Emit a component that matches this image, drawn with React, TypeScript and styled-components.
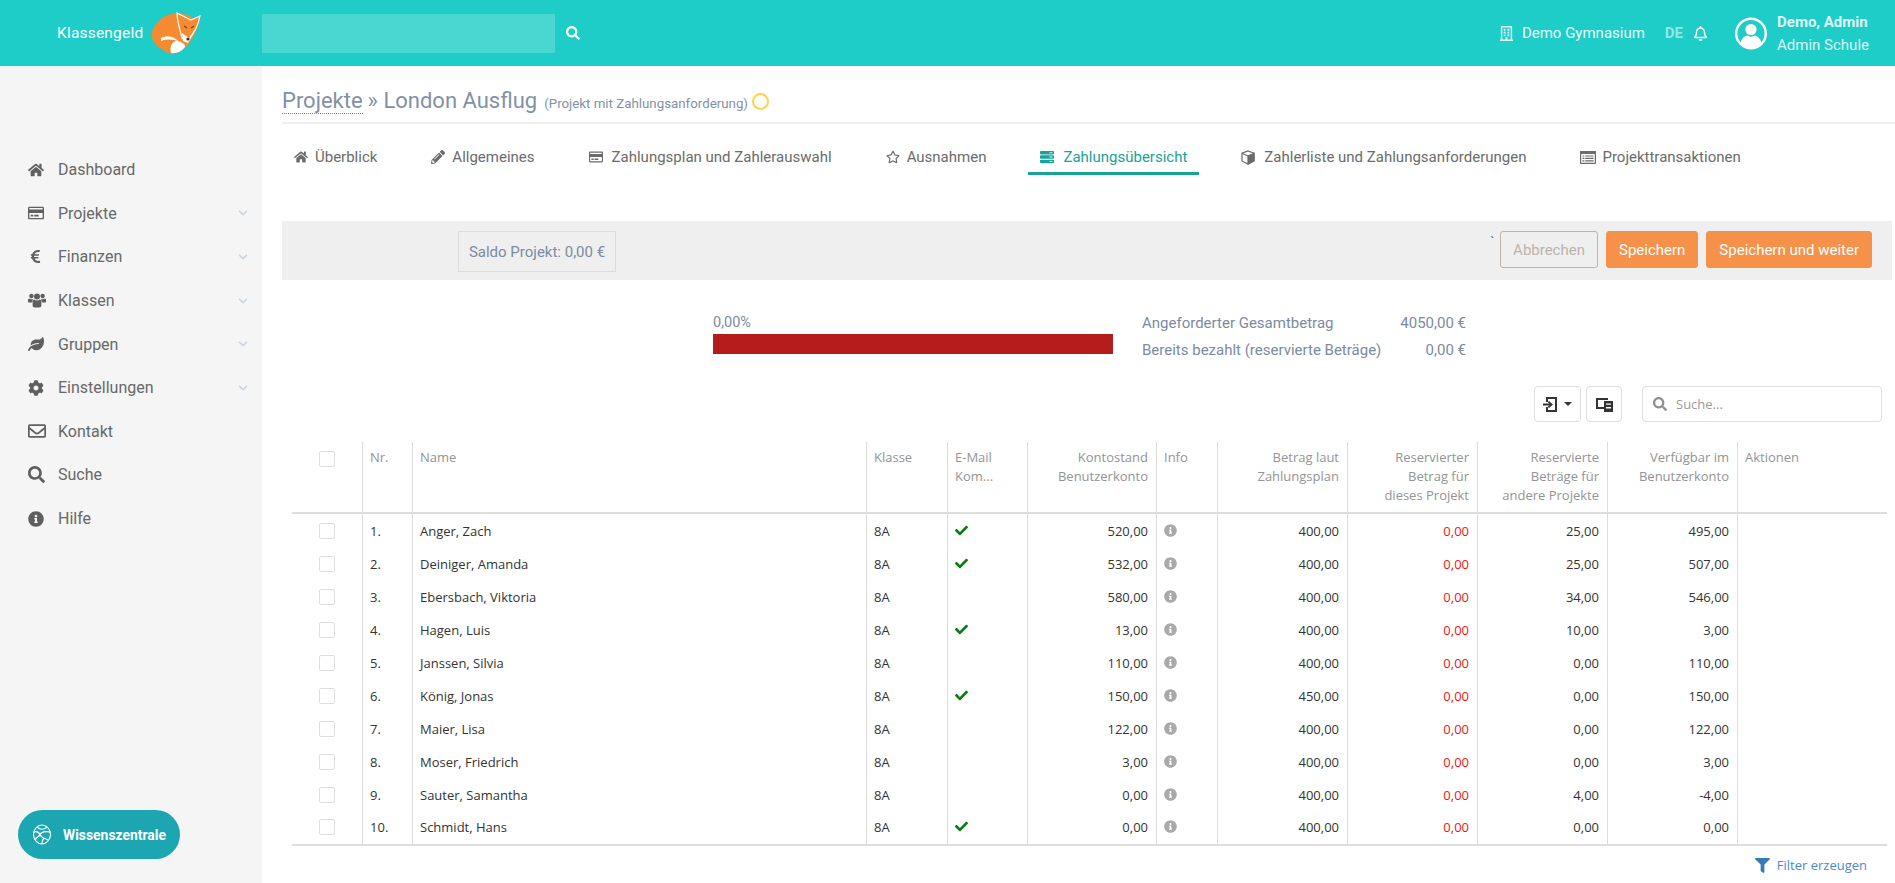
import React from "react";
import styled, { createGlobalStyle } from "styled-components";
import {
   FaHome,
   FaRegCreditCard,
   FaEuroSign,
   FaLeaf,
   FaCog,
   FaRegEnvelope,
   FaSearch,
   FaInfoCircle,
   FaChevronDown,
   FaPencilAlt,
   FaRegStar,
   FaServer,
   FaRegBuilding,
   FaRegBell,
   FaCheck,
   FaFilter,
} from "react-icons/fa";

const GlobalStyle = createGlobalStyle`
   html, body {
      margin: 0;
      padding: 0;
      background: #fff;
      font-family: Roboto, "Liberation Sans", sans-serif;
   }
   * {
      box-sizing: border-box;
   }
`;

const Page = styled.div`
   width: 1895px;
   height: 883px;
   overflow: hidden;
   display: flex;
   flex-direction: column;
`;

const Header = styled.header`
   height: 66px;
   flex: none;
   display: flex;
   align-items: center;
   background: #1ecdc7;
   color: #fff;
`;

const Brand = styled.div`
   width: 262px;
   padding-left: 57px;
   display: flex;
   align-items: center;
   gap: 8px;
   font-size: 15.5px;
   letter-spacing: 0.2px;
`;

const HeaderSearch = styled.div`
   width: 293px;
   height: 39px;
   background: #4ad7d2;
`;

const HeaderSearchIcon = styled(FaSearch)`
   margin-left: 11px;
   font-size: 14px;
`;

const HeaderRight = styled.div`
   margin-left: auto;
   padding-right: 26px;
   display: flex;
   align-items: center;
`;

const School = styled.div`
   display: flex;
   align-items: center;
   gap: 8px;
   font-size: 15px;
   color: #e8fbfa;
`;

const Lang = styled.span`
   margin-left: 20px;
   font-size: 15px;
   font-weight: 700;
   color: #93e6e3;
`;

const Bell = styled(FaRegBell)`
   margin-left: 10px;
   font-size: 15px;
`;

const AvatarWrap = styled.span`
   margin-left: 27px;
   display: flex;
`;

const UserBlock = styled.div`
   margin-left: 10px;
   padding-top: 2px;
   font-size: 15px;
   line-height: 23px;
   color: #dff7f6;
`;

const UserName = styled.div`
   font-weight: 700;
`;

const Body = styled.div`
   flex: 1;
   min-height: 0;
   display: flex;
`;

const Sidebar = styled.aside`
   width: 262px;
   flex: none;
   display: flex;
   flex-direction: column;
   background: #f5f5f5;
   padding: 82px 0 24px;
`;

const Nav = styled.nav`
   display: flex;
   flex-direction: column;
`;

const NavItem = styled.a`
   height: 43.6px;
   padding: 0 14px 0 28px;
   display: flex;
   align-items: center;
   font-size: 16px;
   color: #686868;
`;

const NavIcon = styled.span<{ $size?: number }>`
   width: 30px;
   flex: none;
   display: flex;
   align-items: center;
   font-size: ${(p) => p.$size || 16}px;
   color: #5f5f5f;
`;

const NavChevron = styled(FaChevronDown)`
   margin-left: auto;
   font-size: 10px;
   color: #cbd5de;
`;

const KnowledgeButton = styled.a`
   margin: auto 0 0 18px;
   width: 162px;
   height: 49px;
   border-radius: 25px;
   background: #1ca6b2;
   color: #fff;
   display: flex;
   align-items: center;
   gap: 11px;
   padding-left: 14px;
   font-size: 13.9px;
   font-weight: 700;
`;

const Content = styled.main`
   flex: 1;
   min-width: 0;
   padding: 0 3px 0 20px;
`;

const TitleRow = styled.div`
   height: 58px;
   margin-right: -3px;
   padding-top: 13px;
   display: flex;
   align-items: center;
   color: #8291a5;
   border-bottom: 2px solid #efefef;
   font-size: 22px;
`;

const TitleLink = styled.a`
   border-bottom: 1px dotted #6f7f94;
   line-height: 25px;
`;

const TitleText = styled.span`
   margin-left: 5px;
`;

const TitleNote = styled.small`
   margin-left: 7px;
   font-size: 13.3px;
   padding-top: 6px;
`;

const StatusRing = styled.span`
   margin: 2px 0 0 4px;
   width: 17px;
   height: 17px;
   border-radius: 50%;
   border: 2px solid #fcd34d;
`;

const Tabs = styled.div`
   margin-top: 14px;
   height: 37px;
   display: flex;
   gap: 30px;
`;

const Tab = styled.a<{ $active?: boolean }>`
   padding: 10px 12px 0;
   height: 37px;
   display: flex;
   align-items: flex-start;
   gap: 6px;
   font-size: 15px;
   line-height: 18px;
   color: ${(p) => (p.$active ? "#17a398" : "#6b6b6b")};
   border-bottom: ${(p) => (p.$active ? "3px solid #17a398" : "0")};
`;

const TabIcon = styled.span<{ $w: number }>`
   width: ${(p) => p.$w}px;
   height: 18px;
   flex: none;
   display: flex;
   align-items: center;
   font-size: 14px;
`;

const ActionBar = styled.div`
   margin-top: 46px;
   height: 59px;
   padding: 10px 20px 0 176px;
   display: flex;
   align-items: flex-start;
   background: #efefef;
`;

const Saldo = styled.div`
   width: 158px;
   height: 41px;
   border: 1px solid #dcdcdc;
   display: flex;
   align-items: center;
   justify-content: center;
   font-size: 15px;
   color: #7c8ba0;
`;

const Tick = styled.span`
   margin-left: auto;
   margin-right: 6px;
   font-size: 12px;
   line-height: 22px;
   color: #555;
`;

const Button = styled.button<{ $primary?: boolean }>`
   height: 37px;
   padding: 0 12px;
   margin-left: ${(p) => (p.$primary ? "8px" : "0")};
   border-radius: 3px;
   border: 1px solid ${(p) => (p.$primary ? "#f69149" : "#bfb2aa")};
   background: ${(p) => (p.$primary ? "#f69149" : "transparent")};
   color: ${(p) => (p.$primary ? "#fff" : "#bfb2aa")};
   font-family: inherit;
   font-size: 15px;
`;

const Summary = styled.div`
   margin: 31px 0 0 431px;
   display: flex;
   gap: 29px;
   color: #7c8ba0;
   font-size: 15px;
`;

const ProgressBlock = styled.div`
   width: 400px;
   font-size: 14.5px;
`;

const ProgressLabel = styled.div`
   height: 23px;
   line-height: 24px;
`;

const ProgressBar = styled.div`
   height: 20px;
   background: #b51c1c;
`;

const Totals = styled.div`
   width: 324px;
   margin-top: -2px;
`;

const TotalRow = styled.div`
   height: 27px;
   display: flex;
   justify-content: space-between;
   align-items: center;
`;

const TableTools = styled.div`
   margin-top: 23px;
   padding-right: 10px;
   display: flex;
   justify-content: flex-end;
   gap: 5px;
`;

const ToolButton = styled.button<{ $wide?: boolean }>`
   height: 36px;
   width: ${(p) => (p.$wide ? 47 : 36)}px;
   padding: 0;
   display: flex;
   align-items: center;
   justify-content: center;
   gap: 7px;
   background: #fff;
   border: 1px solid #dfdfdf;
   border-radius: 4px;
`;

const Caret = styled.span`
   border-left: 4px solid transparent;
   border-right: 4px solid transparent;
   border-top: 4px solid #333;
`;

const SearchField = styled.div`
   margin-left: 15px;
   width: 240px;
   height: 36px;
   padding-left: 10px;
   display: flex;
   align-items: center;
   gap: 9px;
   border: 1px solid #dfdfdf;
   border-radius: 4px;
   font-family: "Open Sans", sans-serif;
   font-size: 13px;
   color: #9b9b9b;
   svg {
      color: #8f8f8f;
      font-size: 14px;
   }
`;

const Table = styled.table`
   margin: 20px 0 0 10px;
   width: 1595px;
   table-layout: fixed;
   border-collapse: separate;
   border-spacing: 0;
   font-family: "Open Sans", "Noto Sans", sans-serif;
   font-size: 13px;
`;

const HeadCell = styled.th<{ $right?: boolean }>`
   height: 72px;
   padding: 6px 8px 0 7px;
   vertical-align: top;
   text-align: ${(p) => (p.$right ? "right" : "left")};
   font-weight: 400;
   line-height: 19px;
   color: #949494;
   border-right: 1px solid #dcdcdc;
   border-bottom: 2px solid #dedede;
   &:last-child {
      border-right: 0;
   }
`;

const Cell = styled.td<{ $right?: boolean; $red?: boolean }>`
   height: 33px;
   padding: 0 8px 0 7px;
   text-align: ${(p) => (p.$right ? "right" : "left")};
   color: ${(p) => (p.$red ? "#f01414" : "#333")};
   border-right: 1px solid #dcdcdc;
   &:last-child {
      border-right: 0;
   }
`;

const Row = styled.tr`
   &:last-child td {
      height: 35px;
      padding-bottom: 2px;
      border-bottom: 2px solid #dedede;
   }
`;

const CheckBox = styled.span`
   display: block;
   width: 16px;
   height: 16px;
   margin-left: 20px;
   border: 1px solid #dedede;
   border-radius: 2px;
   background: #fff;
`;

const HeadCheckBox = styled(CheckBox)`
   margin-top: 3px;
`;

const Ok = styled(FaCheck)`
   display: block;
   font-size: 13px;
   color: #0a7d12;
`;

const InfoMark = styled(FaInfoCircle)`
   display: block;
   font-size: 13px;
   color: #a9a9a9;
`;

const FilterLink = styled.a`
   margin: 10px 25px 0 0;
   display: flex;
   justify-content: flex-end;
   align-items: center;
   gap: 7px;
   font-family: "Open Sans", sans-serif;
   font-size: 13px;
   color: #4a8bc9;
   svg {
      color: #337ab7;
      font-size: 15px;
   }
`;

const UsersIcon = () => (
   <svg width="18" height="15" viewBox="0 0 18 15" fill="currentColor">
      <circle cx="3.4" cy="3" r="2.2" />
      <circle cx="14.6" cy="3" r="2.2" />
      <circle cx="9" cy="3.6" r="3" />
      <path d="M0 6.8 C0 5.8 1 5.6 2 5.8 C3 6.4 4 6.4 5 6 C4.8 7.2 4.4 8.4 3.8 9.4 H1 C0.3 9.4 0 9 0 8.4 Z" />
      <path d="M18 6.8 C18 5.8 17 5.6 16 5.8 C15 6.4 14 6.4 13 6 C13.2 7.2 13.6 8.4 14.2 9.4 H17 C17.7 9.4 18 9 18 8.4 Z" />
      <path d="M4.6 9 C4.6 7.4 5.4 6.6 6.2 6.6 C7.6 7.8 10.4 7.8 11.8 6.6 C12.6 6.6 13.4 7.4 13.4 9 V12.6 C13.4 13.8 12.6 14.6 11.4 14.6 H6.6 C5.4 14.6 4.6 13.8 4.6 12.6 Z" />
   </svg>
);

const CubeIcon = () => (
   <svg width="14" height="15" viewBox="0 0 14 15" fill="none" stroke="currentColor" strokeWidth="1.2">
      <path d="M7 1 L13 3.2 V11 L7 14 L1 11 V3.2 Z" />
      <path d="M7 6 V14 L13 11 V3.4 Z" fill="currentColor" />
      <path d="M1 3.2 L7 6" />
   </svg>
);

const ListIcon = () => (
   <svg width="16" height="13" viewBox="0 0 16 13" fill="currentColor">
      <path fillRule="evenodd" d="M1 0 H15 C15.6 0 16 .4 16 1 V12 C16 12.6 15.6 13 15 13 H1 C.4 13 0 12.6 0 12 V1 C0 .4 .4 0 1 0 Z M1.2 3 V11.8 H14.8 V3 Z" />
      <path d="M2.4 4.4 H4.4 V5.6 H2.4 Z M5.2 4.4 H13.6 V5.6 H5.2 Z M2.4 6.8 H4.4 V8 H2.4 Z M5.2 6.8 H13.6 V8 H5.2 Z M2.4 9.2 H4.4 V10.4 H2.4 Z M5.2 9.2 H13.6 V10.4 H5.2 Z" />
   </svg>
);

const AvatarIcon = () => (
   <svg width="32" height="33" viewBox="0 0 32 33" fill="none">
      <circle cx="16" cy="16.5" r="14.8" stroke="#fff" strokeWidth="2.4" />
      <circle cx="16" cy="12.5" r="5.6" fill="#fff" />
      <path d="M5.6 26 C6.4 21.4 9.6 19 12.4 18.6 C14.4 20 17.6 20 19.6 18.6 C22.4 19 25.6 21.4 26.4 26 C23.6 29 20 30.4 16 30.4 C12 30.4 8.4 29 5.6 26 Z" fill="#fff" />
   </svg>
);

const FoxLogo = () => (
   <svg width="50" height="42" viewBox="0 0 50 42">
      <path d="M26 1 C14 2 4 9 1 20 C-1 28 6 36 18 41 C24 43 30 40 36 34 C42 27 48 16 49 4 L44 7 C38 3 32 1 26 1 Z" fill="#f58a30" />
      <path d="M26 1 L40 8 L49 4 C47 14 42 23 37 29 L31 26 C29 18 26 9 26 1 Z" fill="#f58a30" stroke="#fff" strokeWidth="1.2" />
      <path d="M31 21 L38 26 L44 17 L42 22 L37 31 L32 29 Z" fill="#fff" />
      <path d="M33 14 L36 16 M43 14 L40 16" stroke="#7a4a1e" strokeWidth="1.4" />
      <circle cx="37" cy="27" r="1.6" fill="#333" />
      <path d="M10 26 C18 23 24 25 28 30 C22 27 16 27 10 29 Z" fill="#fff" />
      <path d="M20 41 C18 34 22 28 27 29 C31 30 35 33 34 35 C30 40 25 42 20 41 Z" fill="#fff" />
   </svg>
);

const GlobeIcon = () => (
   <svg width="20" height="21" viewBox="0 0 20 21" fill="none" stroke="#fff" strokeWidth="1.2">
      <ellipse cx="10" cy="10.5" rx="8.5" ry="9.5" />
      <path d="M5 3 C8 6 12 6 15 3 M2 8 C5 7 7 8 8 11 C9 8 12 7 18 8 M8 11 C6 13 4 14 3 16 M8 11 C10 14 14 15 16 16 M10 20 C10 17 11 15 12 14" />
   </svg>
);

const LoginIcon = () => (
   <svg width="14" height="15" viewBox="0 0 14 15" fill="none" stroke="#333" strokeWidth="2">
      <path d="M4 5 V1 H13 V14 H4 V10" />
      <path d="M0 7.5 H8" />
      <path d="M5.4 4.6 L8.6 7.5 L5.4 10.4" strokeWidth="1.8" />
   </svg>
);

const ColumnsIcon = () => (
   <svg width="17" height="15" viewBox="0 0 17 15">
      <path d="M0 1 H12 V3 H2 V10 H8 V12 H0 Z" fill="#333" />
      <path fillRule="evenodd" d="M8 4 H17 V15 H8 Z M10 6.4 V7.8 H15 V6.4 Z M10 10 V11.4 H15 V10 Z" fill="#333" />
   </svg>
);

const columnWidths = [71, 50, 454, 81, 80, 129, 61, 130, 130, 130, 130, 149];

const navItems = [
   { label: "Dashboard", icon: <FaHome /> },
   { label: "Projekte", icon: <FaRegCreditCard />, sub: true },
   { label: "Finanzen", icon: <FaEuroSign />, size: 15, sub: true },
   { label: "Klassen", icon: <UsersIcon />, sub: true },
   { label: "Gruppen", icon: <FaLeaf />, sub: true },
   { label: "Einstellungen", icon: <FaCog />, sub: true },
   { label: "Kontakt", icon: <FaRegEnvelope />, size: 18 },
   { label: "Suche", icon: <FaSearch />, size: 17 },
   { label: "Hilfe", icon: <FaInfoCircle /> },
];

const tabs = [
   { label: "Überblick", icon: <FaHome />, w: 15 },
   { label: "Allgemeines", icon: <FaPencilAlt />, w: 15 },
   { label: "Zahlungsplan und Zahlerauswahl", icon: <FaRegCreditCard />, w: 17 },
   { label: "Ausnahmen", icon: <FaRegStar />, w: 15 },
   { label: "Zahlungsübersicht", icon: <FaServer />, w: 17, active: true },
   { label: "Zahlerliste und Zahlungsanforderungen", icon: <CubeIcon />, w: 17 },
   { label: "Projekttransaktionen", icon: <ListIcon />, w: 16 },
];

const payers = [
   ["Anger, Zach", true, "520,00", "400,00", "25,00", "495,00"],
   ["Deiniger, Amanda", true, "532,00", "400,00", "25,00", "507,00"],
   ["Ebersbach, Viktoria", false, "580,00", "400,00", "34,00", "546,00"],
   ["Hagen, Luis", true, "13,00", "400,00", "10,00", "3,00"],
   ["Janssen, Silvia", false, "110,00", "400,00", "0,00", "110,00"],
   ["König, Jonas", true, "150,00", "450,00", "0,00", "150,00"],
   ["Maier, Lisa", false, "122,00", "400,00", "0,00", "122,00"],
   ["Moser, Friedrich", false, "3,00", "400,00", "0,00", "3,00"],
   ["Sauter, Samantha", false, "0,00", "400,00", "4,00", "-4,00"],
   ["Schmidt, Hans", true, "0,00", "400,00", "0,00", "0,00"],
] as const;

const App = () => {
   return (
      <Page>
         <GlobalStyle />
         <Header>
            <Brand>
               Klassengeld
               <FoxLogo />
            </Brand>
            <HeaderSearch />
            <HeaderSearchIcon />
            <HeaderRight>
               <School>
                  <FaRegBuilding />
                  Demo Gymnasium
               </School>
               <Lang>DE</Lang>
               <Bell />
               <AvatarWrap>
                  <AvatarIcon />
               </AvatarWrap>
               <UserBlock>
                  <UserName>Demo, Admin</UserName>
                  Admin Schule
               </UserBlock>
            </HeaderRight>
         </Header>
         <Body>
            <Sidebar>
               <Nav>
                  {navItems.map((item) => (
                     <NavItem key={item.label}>
                        <NavIcon $size={item.size}>{item.icon}</NavIcon>
                        {item.label}
                        {item.sub && <NavChevron />}
                     </NavItem>
                  ))}
               </Nav>
               <KnowledgeButton>
                  <GlobeIcon />
                  Wissenszentrale
               </KnowledgeButton>
            </Sidebar>
            <Content>
               <TitleRow>
                  <TitleLink>Projekte</TitleLink>
                  <TitleText>» London Ausflug</TitleText>
                  <TitleNote>(Projekt mit Zahlungsanforderung)</TitleNote>
                  <StatusRing />
               </TitleRow>
               <Tabs>
                  {tabs.map((tab) => (
                     <Tab key={tab.label} $active={tab.active}>
                        <TabIcon $w={tab.w}>{tab.icon}</TabIcon>
                        {tab.label}
                     </Tab>
                  ))}
               </Tabs>
               <ActionBar>
                  <Saldo>Saldo Projekt: 0,00 €</Saldo>
                  <Tick>`</Tick>
                  <Button>Abbrechen</Button>
                  <Button $primary>Speichern</Button>
                  <Button $primary>Speichern und weiter</Button>
               </ActionBar>
               <Summary>
                  <ProgressBlock>
                     <ProgressLabel>0,00%</ProgressLabel>
                     <ProgressBar />
                  </ProgressBlock>
                  <Totals>
                     <TotalRow>
                        <span>Angeforderter Gesamtbetrag</span>
                        <span>4050,00 €</span>
                     </TotalRow>
                     <TotalRow>
                        <span>Bereits bezahlt (reservierte Beträge)</span>
                        <span>0,00 €</span>
                     </TotalRow>
                  </Totals>
               </Summary>
               <TableTools>
                  <ToolButton $wide>
                     <LoginIcon />
                     <Caret />
                  </ToolButton>
                  <ToolButton>
                     <ColumnsIcon />
                  </ToolButton>
                  <SearchField>
                     <FaSearch />
                     Suche...
                  </SearchField>
               </TableTools>
               <Table>
                  <colgroup>
                     {columnWidths.map((w, i) => (
                        <col key={i} width={w} />
                     ))}
                  </colgroup>
                  <thead>
                     <tr>
                        <HeadCell>
                           <HeadCheckBox />
                        </HeadCell>
                        <HeadCell>Nr.</HeadCell>
                        <HeadCell>Name</HeadCell>
                        <HeadCell>Klasse</HeadCell>
                        <HeadCell>
                           E-Mail
                           <br />
                           Kom...
                        </HeadCell>
                        <HeadCell $right>
                           Kontostand
                           <br />
                           Benutzerkonto
                        </HeadCell>
                        <HeadCell>Info</HeadCell>
                        <HeadCell $right>
                           Betrag laut
                           <br />
                           Zahlungsplan
                        </HeadCell>
                        <HeadCell $right>
                           Reservierter
                           <br />
                           Betrag für
                           <br />
                           dieses Projekt
                        </HeadCell>
                        <HeadCell $right>
                           Reservierte
                           <br />
                           Beträge für
                           <br />
                           andere Projekte
                        </HeadCell>
                        <HeadCell $right>
                           Verfügbar im
                           <br />
                           Benutzerkonto
                        </HeadCell>
                        <HeadCell>Aktionen</HeadCell>
                     </tr>
                  </thead>
                  <tbody>
                     {payers.map((p, i) => (
                        <Row key={p[0]}>
                           <Cell>
                              <CheckBox />
                           </Cell>
                           <Cell>{i + 1}.</Cell>
                           <Cell>{p[0]}</Cell>
                           <Cell>8A</Cell>
                           <Cell>{p[1] && <Ok />}</Cell>
                           <Cell $right>{p[2]}</Cell>
                           <Cell>
                              <InfoMark />
                           </Cell>
                           <Cell $right>{p[3]}</Cell>
                           <Cell $right $red>
                              0,00
                           </Cell>
                           <Cell $right>{p[4]}</Cell>
                           <Cell $right>{p[5]}</Cell>
                           <Cell />
                        </Row>
                     ))}
                  </tbody>
               </Table>
               <FilterLink>
                  <FaFilter />
                  Filter erzeugen
               </FilterLink>
            </Content>
         </Body>
      </Page>
   );
};

export default App;
